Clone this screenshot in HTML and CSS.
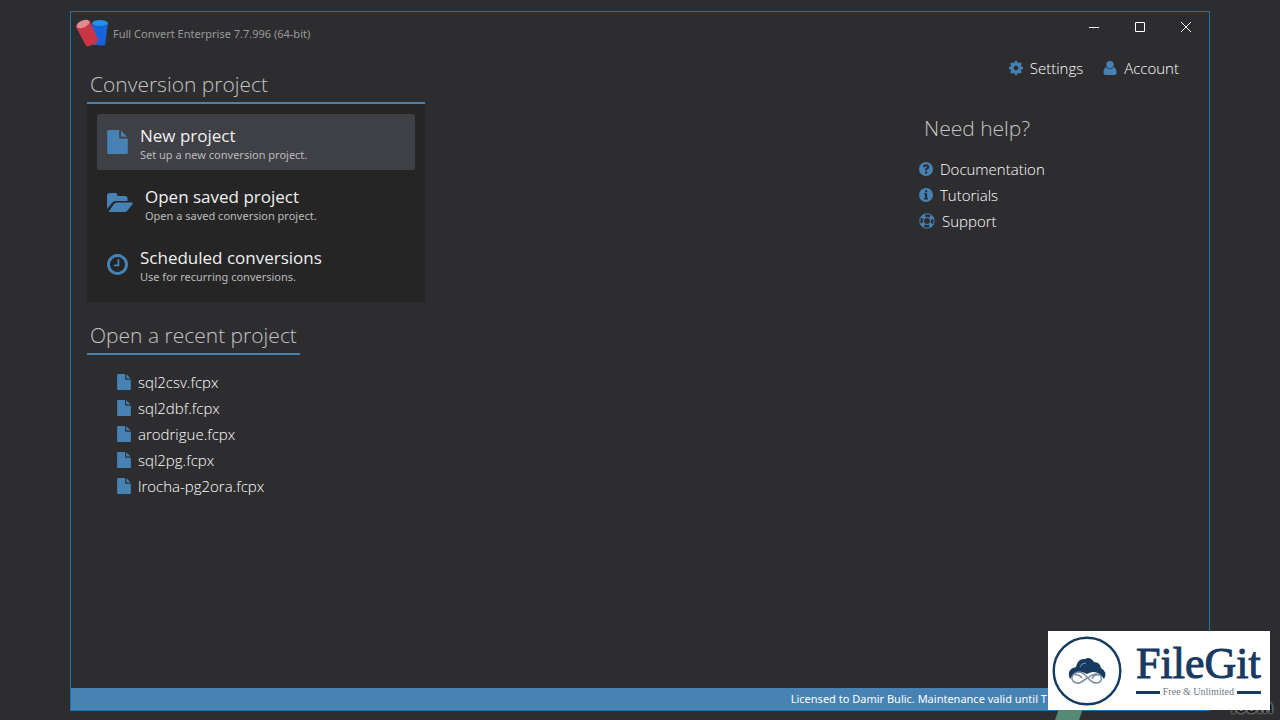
FILE: index.html
```html
<!DOCTYPE html>
<html lang="en">
<head>
<meta charset="utf-8">
<title>Full Convert Enterprise</title>
<link rel="stylesheet" href="styles.css">
</head>
<body>
<svg class="defs" aria-hidden="true">
  <symbol id="file" viewBox="128 0 1536 1792"><path d="M1152 512v-472q22 14 36 28l408 408q14 14 28 36h-472zm-128 32q0 40 28 68t68 28h544v1056q0 40-28 68t-68 28h-1344q-40 0-68-28t-28-68v-1600q0-40 28-68t68-28h800v544z"/></symbol>
  <symbol id="cog" viewBox="128 128 1536 1536"><path d="M1152 896q0-106-75-181t-181-75-181 75-75 181 75 181 181 75 181-75 75-181zm512-109v222q0 12-8 23t-20 13l-185 28q-19 54-39 91 35 50 107 138 10 12 10 25t-9 23q-27 37-99 108t-94 71q-12 0-26-9l-138-108q-44 23-91 38-16 136-29 186-7 28-36 28h-222q-14 0-24.500-8.500t-11.500-21.500l-28-184q-49-16-90-37l-141 107q-10 9-25 9-14 0-25-11-126-114-165-168-7-10-7-23 0-12 8-23 15-21 51-66.500t54-70.500q-27-50-41-99l-183-27q-13-2-21-12.500t-8-23.500v-222q0-12 8-23t19-13l186-28q14-46 39-92-40-57-107-138-10-12-10-24 0-10 9-23 26-36 98.500-107.500t94.500-71.500q13 0 26 10l138 107q44-23 91-38 16-136 29-186 7-28 36-28h222q14 0 24.500 8.500t11.500 21.500l28 184q49 16 90 37l142-107q9-9 24-9 13 0 25 10 129 119 165 170 7 8 7 22 0 12-8 23-15 21-51 66.500t-54 70.500q26 50 41 98l183 28q13 2 21 12.500t8 23.500z"/></symbol>
</svg>
<main class="window">
  <header class="titlebar">
    <svg class="app-logo" viewBox="0 0 32 30" aria-hidden="true">
      <path d="M16 5l1 19q5 5 12 3l3-22z" fill="#1763dc"/>
      <ellipse cx="24" cy="5" rx="8" ry="3" fill="#2491e8"/>
      <path d="M15 7l8 16-3 4h-3z" fill="#5553b5"/>
      <path d="M0 9L10 28q6 1 12-6L14 3z" fill="#c93447"/>
      <ellipse cx="7" cy="6" rx="7" ry="3.500" transform="rotate(-24 7 6)" fill="#e28a91"/>
    </svg>
    <h1 class="app-title">Full Convert Enterprise 7.7.996 (64-bit)</h1>
    <div class="controls">
      <button class="control" aria-label="Minimize"><svg viewBox="0 0 12 12"><path d="M1 6.500h10"/></svg></button>
      <button class="control" aria-label="Maximize"><svg viewBox="0 0 12 12"><path d="M1.500 1.500h9v9h-9z"/></svg></button>
      <button class="control" aria-label="Close"><svg viewBox="0 0 12 12"><path d="M1 1l10 10M11 1L1 11"/></svg></button>
    </div>
  </header>
  <div class="content">
    <div class="projects">
      <section>
        <h2 class="heading">Conversion project</h2>
        <div class="panel">
          <button class="action active">
            <svg class="action-icon" viewBox="0 0 21 24"><use href="#file"/></svg>
            <span class="action-text"><span class="action-title">New project</span><span class="action-note">Set up a new conversion project.</span></span>
          </button>
          <button class="action">
            <svg class="action-icon folder" viewBox="0 0 26 20"><path d="M0 16V2.500Q0 0 2.500 0H8q2.500 0 2.500 2.500V3H18q2.500 0 2.500 2.500V8H9Q6.500 8 5 10zM1.500 19L6.500 11.500Q8 9.500 10 9.500H25q1.500 0 .6 1.600L20.500 17.500Q19 19 17 19z"/></svg>
            <span class="action-text"><span class="action-title">Open saved project</span><span class="action-note">Open a saved conversion project.</span></span>
          </button>
          <button class="action">
            <svg class="action-icon" viewBox="0 0 21 24"><path fill-rule="evenodd" d="M10.500 2a10.500 10.500 0 1 0 .01 0zM10.500 5a7.500 7.500 0 1 1-.01 0zM10.500 7.200h1.800v7H7v-1.800h3.500z"/></svg>
            <span class="action-text"><span class="action-title">Scheduled conversions</span><span class="action-note">Use for recurring conversions.</span></span>
          </button>
        </div>
      </section>
      <section class="recent">
        <h2 class="heading recent-heading">Open a recent project</h2>
        <ul class="list recent-list">
          <li><a class="link" href="#"><svg class="small-file"><use href="#file"/></svg>sql2csv.fcpx</a></li>
          <li><a class="link" href="#"><svg class="small-file"><use href="#file"/></svg>sql2dbf.fcpx</a></li>
          <li><a class="link" href="#"><svg class="small-file"><use href="#file"/></svg>arodrigue.fcpx</a></li>
          <li><a class="link" href="#"><svg class="small-file"><use href="#file"/></svg>sql2pg.fcpx</a></li>
          <li><a class="link" href="#"><svg class="small-file"><use href="#file"/></svg>lrocha-pg2ora.fcpx</a></li>
        </ul>
      </section>
    </div>
    <aside class="side">
      <nav class="account">
        <a class="link" href="#"><svg class="icon"><use href="#cog"/></svg>Settings</a>
        <a class="link" href="#"><svg class="icon" viewBox="0 0 14 14"><circle cx="7" cy="3.700" r="3.700"/><path d="M3.200 6.300Q7 10 10.800 6.300 13.500 7 13.500 11.500 13.500 14 11.500 14h-9Q.5 14 .5 11.500.5 7 3.200 6.300z"/></svg>Account</a>
      </nav>
      <section class="help">
        <h2 class="help-heading">Need help?</h2>
        <ul class="list">
          <li><a class="link" href="#"><svg class="icon" viewBox="0 0 14 14"><circle cx="7" cy="7" r="7"/><path class="cut-line" d="M4.700 5.200Q5 3.200 7.200 3.200 9.300 3.300 9.300 5.100 9.200 6.300 7.100 7.200v1.300"/><path class="cut" d="M6 9.600h2.200v2H6z"/></svg>Documentation</a></li>
          <li><a class="link" href="#"><svg class="icon" viewBox="0 0 14 14"><circle cx="7" cy="7" r="7"/><path class="cut" d="M6 2.300h2.200v2H6zM5 5.300h3.200v4.700H9v1.500H5V10h1V6.800H5z"/></svg>Tutorials</a></li>
          <li><a class="link" href="#"><svg class="icon lifebuoy" viewBox="0 0 16 16"><circle cx="8" cy="8" r="5.500" stroke-width="4" stroke-dasharray="3.600 5.040" stroke-dashoffset="-2.520"  transform="rotate(0 8 8)"/><circle cx="8" cy="8" r="7.200"/><circle cx="8" cy="8" r="3.600"/></svg>Support</a></li>
        </ul>
      </section>
    </aside>
  </div>
  <footer class="status">Licensed to Damir Bulic. Maintenance valid until T</footer>
</main>
<svg class="swoosh" viewBox="0 0 30 14" aria-hidden="true"><path d="M5 0h23q-1 7-4 14H0z"/></svg>
<span class="domain">.com</span>
<div class="brand">
  <svg class="brand-logo" viewBox="0 0 70 70" aria-hidden="true">
    <circle cx="35" cy="35" r="33.300" fill="none" stroke="#173a60" stroke-width="2.400"/>
    <path d="M18 43Q14 33 24 31 26 22 33 23 38 20 42 26q6 0 7 6 7 4 3 11Q45 32 35 38 25 32 18 43z" fill="#173a60"/>
    <path d="M35 41q-7-8-13-3c-5 5 0 10 5 9 5-1 12-10 18-9 6 1 6 9-1 9q-4 0-9-6M23 39q4-1 7 3M47 39q-5-1-7 4" fill="none" stroke="#7c8c9e" stroke-width="1.500"/>
    <path d="M28 31q1-4 6-4" fill="none" stroke="#8093a8"/>
  </svg>
  <div class="brand-text"><span class="brand-name">FileGit</span><span class="brand-tag">Free &amp; Unlimited</span></div>
</div>
</body>
</html>
```
FILE: styles.css
```css
* { box-sizing: border-box; }

body {
  position: relative;
  display: flex;
  min-height: 100vh;
  margin: 0;
  padding: 11px 70px 9px;
  overflow: hidden;
  background: #2d2d30;
  color: #f1f1f1;
  font: 15px/20px "Open Sans", "Noto Sans", sans-serif;
}

h1, h2, ul { margin: 0; padding: 0; font-weight: 400; }
button { border: 0; background: none; color: inherit; font: inherit; padding: 0; }
svg { flex: none; fill: #4682b4; }
.defs { position: absolute; width: 0; height: 0; }

.window {
  display: flex;
  flex: 1;
  flex-direction: column;
  border: 1px solid #1a74ad;
}

.titlebar { display: flex; height: 43px; padding-left: 5px; }
.app-logo { width: 32px; height: 30px; margin-top: 6px; }
.app-title {
  margin: 12px 0 0 5px;
  color: #999;
  font-family: "Noto Sans", sans-serif;
  font-size: 11px;
  line-height: 20px;
}
.controls { display: flex; margin-left: auto; }
.control { display: grid; place-items: center; width: 46px; height: 30px; }
.control svg { width: 12px; height: 12px; fill: none; stroke: #fff; }

.content {
  display: flex;
  flex: 1;
  justify-content: space-between;
  padding: 0 30px 0 16px;
}

.projects { width: 338px; padding-top: 14px; }
.heading {
  height: 35px;
  padding-left: 3px;
  border-bottom: 2px solid #4682b4;
  color: #c4c4c4;
  font-size: 21px;
  font-weight: 300;
  line-height: 30px;
}
.panel { display: grid; gap: 5px; padding: 10px; background: #252526; }
.action {
  display: flex;
  align-items: flex-start;
  height: 56px;
  padding: 10px;
  border-radius: 2px;
  text-align: left;
}
.active { background: #3f3f46; }
.action-icon { width: 21px; height: 24px; margin: 6px 12px 0 0; }
.folder { width: 26px; height: 20px; margin-top: 8px; }
.action-text { display: grid; }
.action-title { font-size: 17px; line-height: 23px; }
.action-note {
  color: #bbb;
  font-family: "Noto Sans", sans-serif;
  font-size: 11px;
  line-height: 16px;
}

.recent { margin-top: 18px; }
.recent-heading { width: fit-content; padding-right: 3px; }
.list { display: grid; list-style: none; }
.link {
  display: flex;
  align-items: center;
  gap: 7px;
  color: #fff;
  font-weight: 300;
  line-height: 26px;
  text-decoration: none;
}
.recent-list { padding: 14px 0 0 30px; }
.small-file { width: 14px; height: 16px; }
.icon { width: 14px; height: 14px; }
.lifebuoy { width: 16px; height: 16px; fill: none; stroke: #4682b4; }
.cut { fill: #2d2d30; }
.cut-line { fill: none; stroke: #2d2d30; stroke-width: 2; }

.account { display: flex; justify-content: flex-end; gap: 20px; }
.help { padding: 32px 0 0 1px; }
.help-heading {
  padding: 0 0 13px 5px;
  color: #c4c4c4;
  font-size: 21px;
  font-weight: 300;
  line-height: 30px;
}
.side { width: 261px; }

.status {
  padding-right: 162px;
  background: #4682b4;
  color: #fff;
  font-family: "Noto Sans", sans-serif;
  font-size: 11px;
  line-height: 22px;
  text-align: right;
}

.brand {
  position: absolute;
  right: 10px;
  bottom: 10px;
  display: flex;
  gap: 14px;
  width: 222px;
  height: 79px;
  padding: 5px 4px;
  background: #fff;
  color: #173a60;
  font-family: "Liberation Serif", serif;
}
.brand-logo { width: 70px; height: 70px; }
.brand-text { display: grid; align-content: start; width: 124px; padding-top: 6px; }
.brand-name { font-size: 44px; line-height: 44px; -webkit-text-stroke: 1px #173a60; }
.brand-tag {
  display: flex;
  align-items: center;
  gap: 3px;
  color: #6e7b8b;
  font-size: 10px;
  line-height: 12px;
  white-space: nowrap;
}
.brand-tag::before, .brand-tag::after { content: ""; flex: 1; height: 3px; background: #173a60; }
.swoosh { position: absolute; right: 195px; bottom: 0; width: 30px; height: 14px; fill: #558a76; }
.domain {
  position: absolute;
  right: 7px;
  bottom: 1px;
  color: #1c1c1c;
  font: bold 18px/24px "Liberation Sans", sans-serif;
  text-shadow: 0 0 2px #aaa, 0 0 3px #aaa;
}
```
